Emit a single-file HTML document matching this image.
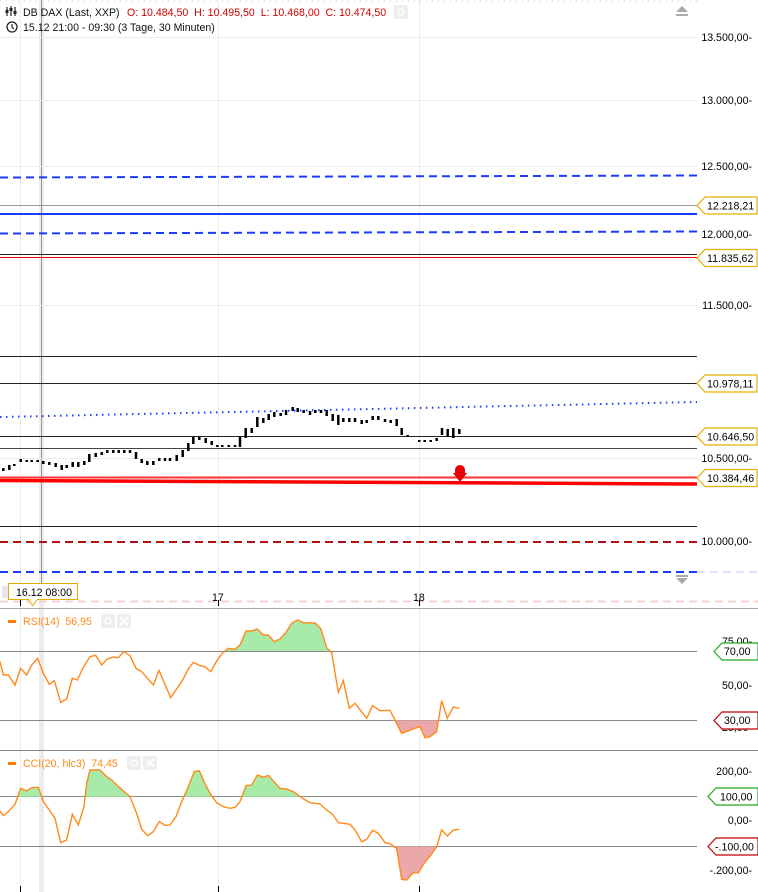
<!DOCTYPE html>
<html><head><meta charset="utf-8"><style>
html,body{margin:0;padding:0;background:#fff;}
body{width:758px;height:892px;overflow:hidden;position:relative;font-family:"Liberation Sans",sans-serif;}
svg{position:absolute;left:0;top:0;}
text{font-family:"Liberation Sans",sans-serif;font-size:10.6px;}
</style></head><body>
<svg width="758" height="892" viewBox="0 0 758 892" xmlns="http://www.w3.org/2000/svg">
<defs>
<clipPath id="rsiUp"><rect x="0" y="600" width="700" height="51"/></clipPath>
<clipPath id="rsiDn"><rect x="0" y="720" width="700" height="30"/></clipPath>
<clipPath id="cciUp"><rect x="0" y="760" width="700" height="36.7"/></clipPath>
<clipPath id="cciDn"><rect x="0" y="846.3" width="700" height="46"/></clipPath>
</defs>
<g stroke="#ececec" stroke-width="1">
<line x1="20.5" y1="0" x2="20.5" y2="892"/><line x1="218.5" y1="0" x2="218.5" y2="892"/><line x1="419.5" y1="0" x2="419.5" y2="892"/>
</g>
<rect x="39" y="0" width="5" height="892" fill="#ececec"/>
<line x1="41.5" y1="0" x2="41.5" y2="600" stroke="#999" stroke-width="1"/>
<g stroke="#ececec"><line x1="0" y1="37.5" x2="697" y2="37.5"/><line x1="0" y1="100.5" x2="697" y2="100.5"/><line x1="0" y1="166.5" x2="697" y2="166.5"/><line x1="0" y1="305.5" x2="697" y2="305.5"/><line x1="0" y1="458.5" x2="697" y2="458.5"/></g>
<line x1="0" y1="1" x2="697" y2="1" stroke="#b8c8f5" stroke-dasharray="1 5"/>
<line x1="0" y1="177.5" x2="697" y2="175.5" stroke="#1a3cff" stroke-width="2" stroke-dasharray="8 5"/>
<line x1="0" y1="205.5" x2="697" y2="205.5" stroke="#999" stroke-width="1"/>
<line x1="0" y1="214" x2="697" y2="214" stroke="#1a3cff" stroke-width="2"/>
<line x1="0" y1="233.5" x2="697" y2="231.5" stroke="#1a3cff" stroke-width="2" stroke-dasharray="8 5"/>
<line x1="0" y1="254.5" x2="697" y2="254.5" stroke="#222" stroke-width="1"/>
<line x1="0" y1="257.5" x2="697" y2="257.5" stroke="#e00" stroke-width="1"/>
<line x1="0" y1="356.5" x2="697" y2="356.5" stroke="#222"/>
<line x1="0" y1="383.5" x2="697" y2="383.5" stroke="#222"/>
<line x1="0" y1="417" x2="697" y2="402" stroke="#1a3cff" stroke-width="2" stroke-dasharray="1.5 4.5"/>
<line x1="0" y1="436.5" x2="697" y2="436.5" stroke="#222"/>
<line x1="0" y1="448.5" x2="697" y2="448.5" stroke="#444"/>
<path d="M0 477.5 L697 477.5" stroke="#f33" stroke-width="2"/>
<path d="M0 480.5 L697 484" stroke="#f00" stroke-width="3.5"/>
<line x1="0" y1="526.5" x2="697" y2="526.5" stroke="#222"/>
<line x1="0" y1="542" x2="697" y2="542" stroke="#b01010" stroke-width="2" stroke-dasharray="8 5"/>
<line x1="0" y1="572" x2="697" y2="572" stroke="#1a3cff" stroke-width="2" stroke-dasharray="8 5"/>
<line x1="697" y1="572" x2="758" y2="572" stroke="#dde4ff" stroke-width="2" stroke-dasharray="8 5"/>
<line x1="0" y1="601.5" x2="758" y2="601.5" stroke="#fbd0d0" stroke-width="2" stroke-dasharray="8 5"/>
<path d="M455 470 a5 5 0 0 1 10 0 v3 h2 l-7 9 l-7 -9 h2z" fill="#e60000"/>
<path fill="none" stroke="#000" stroke-width="2.5" d="M3.3 468v3M9.3 465v5M14.3 464v2M20.7 459v3M26.7 460v2M31.7 460v2M37.7 460v2M43.3 461v3M49.3 462v3M55.7 463v4M61.7 465v5M66.7 465v3M72.7 462v5M78.3 462v5M84.3 461v4M89.3 454v8M95.7 453v4M101.7 452v3M107.3 450v3M113.3 450v3M118.7 450v3M124.3 450v3M130 450v3M136 452v7M141.7 459v4M147.3 461v4M153.3 461v4M159.3 458v3M165 458v3M170 458v3M176.7 455v6M182.7 450v7M188.3 443v8M193.3 437v7M199.3 437v3M205.7 438v5M211.7 441v4M217.3 445v2M222.3 445v2M228.7 445v2M235 445v2M240 437v10M245.7 428v10M251.7 428v5M257.3 417v10M263.3 418v5M268.7 414v6M274.3 412v5M280.7 413v3M286 410v5M292.7 407v4M297.7 408v4M303.7 410v3M310 411v4M315.3 410v3M321 410v3M326.7 410v6M332.7 414v7M338.3 415v10M343.3 418v4M349.3 418v4M355 418v4M361.7 420v4M366.7 420v3M372.7 416v4M378.3 416v4M385 419v3M390.7 420v3M396.7 419v7M401.7 428v7M407.7 435v2M419.3 440v2M424.7 440v2M430.7 440v2M436.7 438v3M442 428v7M447.7 429v8M453.3 428v10M459.3 429v5"/>
<line x1="0" y1="608.5" x2="758" y2="608.5" stroke="#aaa"/>
<g fill="#000" text-anchor="end">
<text x="752" y="41">13.500,00-</text>
<text x="752" y="104">13.000,00-</text>
<text x="752" y="170">12.500,00-</text>
<text x="752" y="238">12.000,00-</text>
<text x="752" y="309">11.500,00-</text>
<text x="752" y="462">10.500,00-</text>
<text x="752" y="545">10.000,00-</text>
</g>
<g fill="#fff" stroke="#e8b000" stroke-width="1.2">
<path d="M697 205.5 l8 -8.5 h52 v17 h-52z"/>
<path d="M697 258 l8 -8.5 h52 v17 h-52z"/>
<path d="M697 383.5 l8 -8.5 h52 v17 h-52z"/>
<path d="M697 436.5 l8 -8.5 h52 v17 h-52z"/>
<path d="M697 478 l8 -8.5 h52 v17 h-52z"/>
</g>
<g fill="#000"><text x="707" y="209.5">12.218,21</text><text x="707" y="262">11.835,62</text><text x="707" y="387.5">10.978,11</text><text x="707" y="440.5">10.646,50</text><text x="707" y="482">10.384,46</text></g>
<path d="M676 12 l6 -6 l6 6z M676 14 h12 v2 h-12z" fill="#aaa"/>
<path d="M676 575 h12 v2 h-12z M676 578 l6 6 l6 -6z" fill="#aaa"/>
<g stroke="#000"><line x1="20.5" y1="600" x2="20.5" y2="606"/><line x1="218.5" y1="600" x2="218.5" y2="606"/><line x1="419.5" y1="600" x2="419.5" y2="606"/></g>
<text x="212" y="601" fill="#000">17</text><text x="413" y="601" fill="#000">18</text>
<rect x="2" y="586" width="12" height="12" rx="2" fill="#e6e6e6"/>
<path d="M8.5 583.5 h69 v16 h-40 l-5 6 l-4 -6 h-20z" fill="#fff" stroke="#e0b000"/>
<text x="16" y="596" fill="#000">16.12 08:00</text>
<g stroke="#222" stroke-width="1.2" fill="none"><path d="M7 7v9M11 6v10M15 7v9"/></g>
<g fill="#222"><rect x="5.5" y="10" width="3" height="3"/><rect x="9.5" y="8" width="3" height="3"/><rect x="13.5" y="11" width="3" height="3"/></g>
<text x="23" y="16" fill="#111">DB DAX (Last, XXP)</text>
<text x="127" y="16" fill="#d00000" xml:space="preserve">O: 10.484,50  H: 10.495,50  L: 10.468,00  C: 10.474,50</text>
<rect x="394" y="5" width="14" height="14" rx="2" fill="#eee"/><circle cx="401" cy="12" r="3" fill="none" stroke="#fff" stroke-width="1.5"/>
<circle cx="12" cy="27" r="5" fill="none" stroke="#222" stroke-width="1.3"/><path d="M12 24v3l2 2" stroke="#222" stroke-width="1.2" fill="none"/>
<text x="23" y="31" fill="#111">15.12 21:00 - 09:30 (3 Tage, 30 Minuten)</text>
<line x1="0" y1="651.5" x2="697" y2="651.5" stroke="#888"/>
<line x1="0" y1="720.5" x2="697" y2="720.5" stroke="#888"/>
<g fill="#000" text-anchor="end"><text x="752" y="645">75,00-</text><text x="752" y="689">50,00-</text><text x="752" y="731">25,00-</text></g>
<path d="M714 651.5 l8 -8.5 h36 v17 h-36z" fill="#fff" stroke="#22aa22" stroke-width="1.2"/>
<path d="M714 720.5 l8 -8.5 h36 v17 h-36z" fill="#fff" stroke="#c00000" stroke-width="1.2"/>
<g fill="#000"><text x="724" y="655">70,00</text><text x="724" y="724">30,00</text></g>
<g clip-path="url(#rsiUp)"><g transform="translate(0,615) scale(0.33333)"><path d="M0,140 L113,130 L372,110 L652,135 L668,113 L685,100 L705,103 L720,90 L738,48 L755,48 L772,42 L790,60 L805,60 L822,80 L840,72 L858,52 L875,25 L893,15 L910,23 L945,24 L962,40 L980,98 L995,113 L1015,232 L0,232Z" fill="#a8eaa8"/></g></g>
<g clip-path="url(#rsiDn)"><g transform="translate(0,615) scale(0.33333)"><path d="M1170,316 L1185,315 L1205,355 L1245,340 L1260,335 L1275,368 L1290,365 L1310,350 L1325,257 L1325,316Z" fill="#eba8a8"/></g></g>
<g transform="translate(0,615) scale(0.33333)">
<path d="M0,140 L10,180 L25,180 L45,210 L62,160 L80,180 L95,150 L113,130 L130,175 L148,208 L163,197 L182,262 L200,252 L217,190 L232,195 L250,157 L270,125 L287,121 L305,150 L322,132 L340,126 L355,128 L372,110 L390,122 L408,160 L425,170 L460,210 L477,166 L512,248 L545,200 L565,162 L580,142 L600,152 L615,155 L632,170 L652,135 L668,113 L685,100 L705,103 L720,90 L738,48 L755,48 L772,42 L790,60 L805,60 L822,80 L840,72 L858,52 L875,25 L893,15 L910,23 L945,24 L962,40 L980,98 L995,113 L1015,232 L1030,197 L1048,280 L1065,265 L1100,310 L1118,272 L1140,287 L1170,286 L1185,315 L1205,355 L1245,340 L1260,335 L1275,368 L1290,365 L1310,350 L1325,257 L1342,310 L1360,276 L1378,280" fill="none" stroke="#ff8a1a" stroke-width="1.4" vector-effect="non-scaling-stroke"/>
</g>
<rect x="8" y="620" width="8" height="3" fill="#ff7a00"/>
<text x="23" y="625" fill="#ff8a1a" xml:space="preserve">RSI(14)  56,95</text>
<rect x="101" y="614" width="14" height="14" rx="2" fill="#eee"/><circle cx="108" cy="621" r="3" fill="none" stroke="#fff" stroke-width="1.5"/>
<rect x="117" y="614" width="14" height="14" rx="2" fill="#eee"/><path d="M120 617l8 8M128 617l-8 8" stroke="#fff" stroke-width="2"/>
<line x1="0" y1="750.5" x2="758" y2="750.5" stroke="#888"/>
<line x1="0" y1="796.5" x2="697" y2="796.5" stroke="#888"/>
<line x1="0" y1="846.5" x2="697" y2="846.5" stroke="#888"/>
<g fill="#000" text-anchor="end"><text x="752" y="775">200,00-</text><text x="752" y="824">0,00-</text><text x="752" y="874">-.200,00-</text></g>
<path d="M708 796.5 l8 -8.5 h42 v17 h-42z" fill="#fff" stroke="#22aa22" stroke-width="1.2"/>
<path d="M708 846.5 l8 -8.5 h42 v17 h-42z" fill="#fff" stroke="#c00000" stroke-width="1.2"/>
<g fill="#000"><text x="720" y="800.5">100,00</text><text x="715" y="850.5">-.100,00</text></g>
<g clip-path="url(#cciUp)"><g transform="translate(0,750) scale(0.33333)"><path d="M0,183 L10,197 L25,185 L45,163 L62,115 L80,123 L95,113 L115,112 L130,155 L148,180 L165,205 L182,278 L200,270 L217,193 L235,225 L252,170 L260,100 L270,60 L300,60 L320,80 L335,90 L350,105 L390,140 L410,190 L425,238 L443,257 L460,245 L478,215 L495,226 L510,225 L528,200 L545,155 L565,110 L583,65 L598,62 L612,95 L630,130 L650,158 L670,170 L690,175 L705,172 L720,155 L738,107 L755,105 L772,75 L790,82 L805,76 L822,95 L840,115 L860,117 L880,125 L905,143 L930,158 L930,300 L0,300Z" fill="#a8eaa8"/></g></g>
<g clip-path="url(#cciDn)"><g transform="translate(0,750) scale(0.33333)"><path d="M1170,289 L1190,295 L1205,388 L1220,390 L1240,368 L1255,368 L1275,336 L1295,312 L1310,290 L1310,289Z" fill="#eba8a8"/></g></g>
<g transform="translate(0,750) scale(0.33333)">
<path d="M0,183 L10,197 L25,185 L45,163 L62,115 L80,123 L95,113 L115,112 L130,155 L148,180 L165,205 L182,278 L200,270 L217,193 L235,225 L252,170 L260,100 L270,60 L300,60 L320,80 L335,90 L350,105 L390,140 L410,190 L425,238 L443,257 L460,245 L478,215 L495,226 L510,225 L528,200 L545,155 L565,110 L583,65 L598,62 L612,95 L630,130 L650,158 L670,170 L690,175 L705,172 L720,155 L738,107 L755,105 L772,75 L790,82 L805,76 L822,95 L840,115 L860,117 L880,125 L905,143 L930,158 L960,162 L980,180 L998,193 L1015,218 L1050,223 L1065,240 L1085,275 L1100,268 L1118,241 L1135,250 L1155,278 L1170,281 L1190,295 L1205,388 L1220,390 L1240,368 L1255,368 L1275,336 L1295,312 L1310,290 L1325,240 L1342,258 L1360,240 L1378,238" fill="none" stroke="#ff8a1a" stroke-width="1.4" vector-effect="non-scaling-stroke"/>
</g>
<rect x="8" y="762" width="8" height="3" fill="#ff7a00"/>
<text x="23" y="767" fill="#ff8a1a" xml:space="preserve">CCI(20, hlc3)  74,45</text>
<rect x="127" y="756" width="14" height="14" rx="2" fill="#eee"/><circle cx="134" cy="763" r="3" fill="none" stroke="#fff" stroke-width="1.5"/>
<rect x="143" y="756" width="14" height="14" rx="2" fill="#eee"/><path d="M146 759l8 8M154 759l-8 8" stroke="#fff" stroke-width="2"/>
<g stroke="#000"><line x1="20.5" y1="886" x2="20.5" y2="892"/><line x1="218.5" y1="886" x2="218.5" y2="892"/><line x1="419.5" y1="886" x2="419.5" y2="892"/></g>
</svg>
</body></html>
